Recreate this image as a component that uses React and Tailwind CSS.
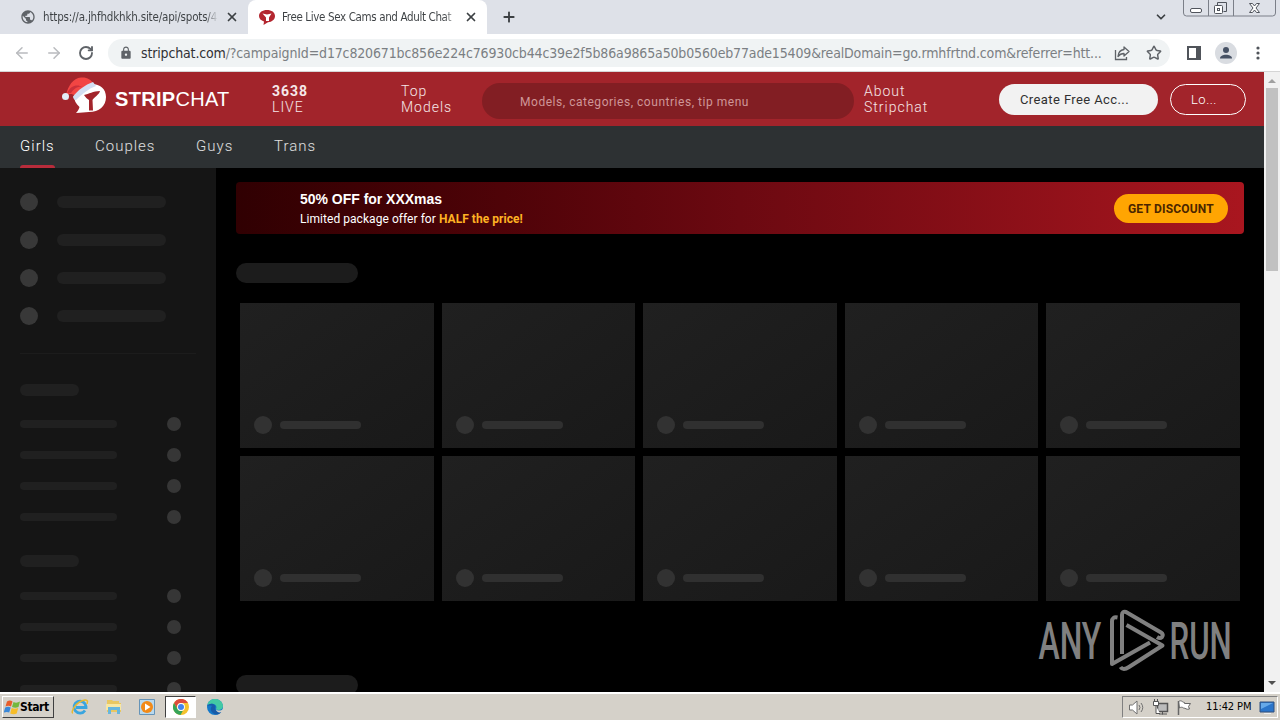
import { ArrowLeft, ArrowRight, ChevronDown, Plus, RotateCw, Star, X } from "lucide-react";
import { MdLock, MdPublic } from "react-icons/md";

const CATEGORIES = [
  { label: "Girls", cls: "ml-5 w-[35px] text-white", active: true },
  { label: "Couples", cls: "ml-10 w-[61px] text-white/85" },
  { label: "Guys", cls: "ml-10 w-[38px] text-white/85" },
  { label: "Trans", cls: "ml-10 w-[42px] text-white/85" },
];

const URL_REST =
  "/?campaignId=d17c820671bc856e224c76930cb44c39e2f5b86a9865a50b0560eb77ade15409&realDomain=go.rmhfrtnd.com&referrer=htt...";

function TabStrip() {
  return (
    <div className="flex h-[34px] bg-[#dee1e8] text-[11.5px] text-[#3c4043]">
      <div className="flex w-[248px] items-center pl-5">
        <MdPublic className="size-4 shrink-0 text-[#5f6368]" />
        <span className="ml-[7px] w-[175px] bg-gradient-to-r from-[#3c4043] from-93% to-transparent bg-clip-text pt-px tracking-[-0.18px] whitespace-nowrap text-transparent">
          https://a.jhfhdkhkh.site/api/spots/4
        </span>
        <X className="ml-[7px] size-3.5" strokeWidth={3} />
      </div>
      <div className="flex w-[239px] items-center rounded-t-lg bg-white pl-[11px]">
        <ChatIcon />
        <span className="ml-[7px] w-[176px] bg-gradient-to-r from-[#3c4043] from-92% to-transparent bg-clip-text pt-px tracking-[-0.36px] whitespace-nowrap text-transparent">
          Free Live Sex Cams and Adult Chat
        </span>
        <X className="ml-[6px] size-3.5" strokeWidth={3} />
      </div>
      <Plus className="mt-[9px] ml-[14px] size-4" strokeWidth={2.8} />
      <ChevronDown className="mt-[10px] ml-auto size-[14px]" strokeWidth={3} />
      <WindowButtons />
    </div>
  );
}

function ChatIcon() {
  return (
    <svg className="size-4 shrink-0" viewBox="0 0 16 16">
      <path d="M8 1c4.500 0 8 2.300 8 6 0 3.500-3 6-7 6.200L4.500 16l.5-3.500C2 11.500 0 9.700 0 7c0-3.700 3.500-6 8-6z" fill="#b3262f" />
      <path d="M3.500 4.500 8 5.500l4.500-1-2.500 4v3.500H7V8.500z" fill="#fff" />
    </svg>
  );
}

function WindowButtons() {
  return (
    <svg className="ml-[15px] h-[18px] w-[97px]" viewBox="0 0 97 18" fill="none" stroke="#7b7f88">
      <path d="M.5 0v13q0 3 3 3h86q3 0 3-3V0M25.500 0v16M50.500 0v16" />
      <g stroke="#50545c">
        <rect x="7.500" y="8.500" width="11" height="4" rx="1.500" fill="#fff" />
        <path d="M34.500 5.500v-3h9v9h-3" />
        <rect x="31.500" y="5.500" width="8" height="8" rx="1" fill="#fff" />
        <rect x="34.500" y="8.500" width="2" height="2" />
        <path d="M66.500 3.500h3l2 2.500 2-2.500h3l-3.500 4.500 3.500 4.500h-3l-2-2.500-2 2.500h-3l3.500-4.500z" fill="#fff" />
      </g>
    </svg>
  );
}

function Toolbar() {
  return (
    <div className="flex h-[38px] items-center border-b border-[#d5d5d5] bg-white text-[#5f6368]">
      <ArrowLeft className="ml-[13px] size-[18px] text-[#b9bbbe]" />
      <ArrowRight className="ml-[14px] size-[18px] text-[#b9bbbe]" />
      <RotateCw className="ml-[15px] size-4" strokeWidth={2.8} />
      <div className="ml-[14px] flex h-7 w-[1062px] items-center rounded-full bg-[#f0f3f4] pl-3">
        <MdLock className="-ml-px size-[14px]" />
        <p className="ml-[8px] w-[964px] pt-px text-[14px] tracking-[-0.15px] whitespace-nowrap text-[#7b7f83]">
          <span className="text-[#303134]">stripchat.com</span>
          {URL_REST}
        </p>
        <svg className="ml-[9px] size-4" viewBox="0 0 16 16" fill="none" stroke="currentColor" strokeWidth="1.300">
          <path d="M1.500 5v9.500h11V12" />
          <path d="M10 2l5 4.500-5 4.500V8.500c-3 0-4.500 1-6 3 .3-4 2.500-6.500 6-7z" strokeLinejoin="round" />
        </svg>
        <Star className="ml-4 size-4" strokeWidth={2.2} />
      </div>
      <svg className="ml-[17px] size-[14px]" viewBox="0 0 14 14">
        <path d="M1 1h12v12H1z" fill="none" stroke="#50545a" strokeWidth="2" />
        <path d="M9 1h4v12H9z" fill="#50545a" />
      </svg>
      <svg className="ml-[14px] size-[22px]" viewBox="0 0 22 22">
        <circle cx="11" cy="11" r="11" fill="#d9dce1" />
        <circle cx="11" cy="8" r="3" fill="#465164" />
        <path d="M5 16.500c0-5 12-5 12 0z" fill="#465164" />
      </svg>
      <svg className="ml-[19px] h-4 w-1" viewBox="0 0 4 16" fill="#50545a">
        <circle cx="2" cy="3" r="1.600" />
        <circle cx="2" cy="8" r="1.600" />
        <circle cx="2" cy="13" r="1.600" />
      </svg>
    </div>
  );
}

function SantaLogo() {
  return (
    <svg className="-mt-[4px] ml-[61px] h-[40px] w-[47px] shrink-0" viewBox="0 0 47 40">
      <path d="M31 7c8 0 14 5 14 13 0 9-7 15-17 15-4 0-8 1-13 1 2-2 3-4 3.500-6C15 27 13 23 13 19z" fill="#fff" />
      <path d="M23 18c5-1 9-4 16-4-1 4-6 6-7.500 9l.5 10.500h-4V23c-2-1-3.500-3-5-5z" fill="#a2242b" />
      <path d="M5 18C7 9 12 1 20 .5c6-.5 10 2 12 6-7 3-13 7-18 12-3-2-5-2-9-.5z" fill="#f24543" />
      <path d="M6 16c4-8 10-9 16-6-6-1-9 2-12 6z" fill="#cb303a" />
      <path d="M12 19.500C17 13 24 8 32 5l3 4c-8 3-14 8-20 14-2 0-3-2-3-3.500z" fill="#d3dff2" />
      <circle cx="4.500" cy="19.500" r="3.500" fill="#e3edf8" />
    </svg>
  );
}

function SiteHeader() {
  return (
    <header className="flex h-[54px] items-center bg-[#a2242b] font-['Roboto','Liberation_Sans',sans-serif] text-[14px] leading-4 font-light tracking-[1px] text-white/90">
      <SantaLogo />
      <p className="ml-[7px] w-[156px] font-['Liberation_Sans',sans-serif] text-[20px] leading-6 font-normal tracking-[0.3px] text-white">
        <b>STRIP</b>CHAT
      </p>
      <p className="w-[130px] pl-px">
        <b className="font-bold">3638</b>
        <br />
        LIVE
      </p>
      <p className="w-[81px]">
        Top
        <br />
        Models
      </p>
      <div className="mt-[4px] flex h-9 w-[372px] items-center rounded-full bg-[#821e23] pt-px pl-[38px] text-[12px] font-normal tracking-[0.53px] text-[#cf9698]">
        Models, categories, countries, tip menu
      </div>
      <p className="ml-[10px] w-[135px]">
        About
        <br />
        Stripchat
      </p>
      <button className="h-[31px] w-[159px] rounded-full bg-[#f2f2f2] pt-px pl-[21px] text-left text-[13px] font-normal tracking-[0.4px] whitespace-nowrap text-[#303030]">
        Create Free Acc...
      </button>
      <button className="ml-3 h-[31px] w-[76px] rounded-full border border-white pt-px pl-5 text-left text-[13px] tracking-[0.5px] text-white">
        Lo...
      </button>
    </header>
  );
}

function CategoryNav() {
  return (
    <nav className="flex h-[42px] bg-[#2d3133] font-['Roboto','Liberation_Sans',sans-serif] text-[15px] font-light tracking-[1px]">
      {CATEGORIES.map((c) => (
        <div key={c.label} className={`flex h-[42px] flex-col justify-between pt-[9px] whitespace-nowrap ${c.cls}`}>
          <span>{c.label}</span>
          {c.active && <span className="h-[3px] rounded-t-sm bg-[#b82c3b]" />}
        </div>
      ))}
    </nav>
  );
}

function SideGroup({ listCls }) {
  return (
    <div className="h-[171px]">
      <div className="h-3 w-[59px] rounded-full bg-[#202020]" />
      <div className={`space-y-[17px] ${listCls}`}>
        {[0, 1, 2, 3].map((i) => (
          <div key={i} className="flex w-[161px] items-center justify-between">
            <div className="h-2 w-[97px] rounded-full bg-[#202020]" />
            <div className="size-[14px] rounded-full bg-[#363636]" />
          </div>
        ))}
      </div>
    </div>
  );
}

function Sidebar() {
  return (
    <aside className="h-full w-[216px] shrink-0 overflow-hidden bg-[#151515] px-5 pt-[25px]">
      <div className="space-y-5">
        {[0, 1, 2, 3].map((i) => (
          <div key={i} className="flex items-center">
            <div className="size-[18px] rounded-full bg-[#383838]" />
            <div className="ml-[19px] h-3 w-[109px] rounded-full bg-[#202020]" />
          </div>
        ))}
      </div>
      <div className="mt-7 mb-[30px] h-px bg-[#1c1c1c]" />
      <SideGroup listCls="mt-[21px]" />
      <SideGroup listCls="mt-[22px]" />
    </aside>
  );
}

function Banner() {
  return (
    <div className="flex h-[52px] items-center rounded bg-gradient-to-r from-[#300002] via-[#6c0911] to-[#a9161f] pr-4 pl-16">
      <div className="pt-[2px]">
        <p className="text-[14px] leading-[18px] font-bold tracking-[-0.02px] text-white">50% OFF for XXXmas</p>
        <p className="mt-[2px] font-['Roboto','Liberation_Sans',sans-serif] text-[12px] leading-[18px] tracking-[0.05px] whitespace-nowrap text-white">
          Limited package offer for <b className="text-[#ffb323]">HALF the price!</b>
        </p>
      </div>
      <button className="ml-auto h-[29px] w-[114px] rounded-full bg-[#ffa502] pt-px font-['Roboto','Liberation_Sans',sans-serif] text-[12px] font-bold tracking-[0.2px] text-[#4a2500]">
        GET DISCOUNT
      </button>
    </div>
  );
}

function Content() {
  return (
    <main className="min-w-0 flex-1 bg-black px-5 pt-[14px]">
      <Banner />
      <div className="mt-[29px] h-5 w-[122px] rounded-full bg-[#1c1c1c]" />
      <div className="mx-1 mt-5 grid grid-cols-5 gap-2">
        {Array.from({ length: 10 }, (_, i) => (
          <div key={i} className="flex h-[145px] items-end bg-gradient-to-br from-[#202020] to-[#191919] pb-[14px] pl-[14px]">
            <div className="size-[18px] rounded-full bg-[#323232]" />
            <div className="mb-[5px] ml-2 h-2 w-[81px] rounded-full bg-[#303030]" />
          </div>
        ))}
      </div>
      <div className="mt-[74px] h-5 w-[122px] rounded-full bg-[#1c1c1c]" />
    </main>
  );
}

function Scrollbar() {
  return (
    <div className="flex w-4 flex-col items-center bg-[#f1f1f1]">
      <svg className="h-4 w-4" viewBox="0 0 16 16">
        <path d="M4 11l4-4 4 4z" fill="#a0a0a0" />
      </svg>
      <div className="h-[183px] w-3 bg-[#c1c1c1]" />
      <svg className="mt-auto h-[17px] w-4" viewBox="0 0 16 17">
        <path d="M4 6l4 4 4-4z" fill="#505050" />
      </svg>
    </div>
  );
}

function Watermark() {
  return (
    <svg className="absolute top-[605px] left-[1034px] h-[72px] w-[202px]" viewBox="0 0 202 72" fill="#808080">
      <g fontFamily="Roboto" fontSize="51" fontWeight="500">
        <text transform="translate(4.500 54.300) scale(.61 1)" textLength="103" lengthAdjust="spacingAndGlyphs">ANY</text>
        <text transform="translate(135.500 54.300) scale(.61 1)" textLength="102" lengthAdjust="spacingAndGlyphs">RUN</text>
      </g>
      <g fill="none" stroke="#808080" strokeWidth="4" strokeLinejoin="round">
        <path d="M83.500 12.500q-5.500-1-5.500 4V59L116 37.500" />
        <path d="M88 49V10q0-4 4-3l35 20.500q3 2 1 4.500-2 2-5 0" />
        <path d="M92.500 20L128.500 40.500 95 62q-6 4-8.500 0" />
      </g>
    </svg>
  );
}

function WindowsFlag() {
  return (
    <svg className="size-4 shrink-0" viewBox="0 0 16 16">
      <path d="M3 2.500q3-2 5.500 0L7 7.500Q4.500 6 1.500 7.500z" fill="#e85d2a" />
      <path d="M9.500 3q3 1.500 6.500-.5L14.500 8q-3 1.500-6.500 0z" fill="#73b83d" />
      <path d="M1.200 8.500q3-1.500 5.500 0L5.200 13.500Q3 12.500-.3 13.500z" fill="#3b88d8" />
      <path d="M7.700 9q3 1.500 6.500 0l-1.500 5.500q-3 1.500-6.500 0z" fill="#f7bd28" />
    </svg>
  );
}

function QuickLaunch() {
  return (
    <>
      <svg className="ml-[17px] size-[18px]" viewBox="0 0 18 18" fill="none">
        <path d="M14 12.500A6 6 0 1 1 15 8.500v1H5" stroke="#39a5df" strokeWidth="2.800" />
        <path d="M2 15C-1 15 5 3 14 2c4-.3 2 3 2 4" stroke="#e8b931" strokeWidth="1.500" />
      </svg>
      <svg className="ml-4 size-[18px]" viewBox="0 0 18 18">
        <path d="M2 2h5l1 1h6v2h2v9H2z" fill="#e9c761" />
        <path d="M1 6h15v6H1z" fill="#f8e7a2" />
        <path d="M3 16V9h12v7h-3v-4H6v4z" fill="#68b6dd" />
      </svg>
      <svg className="ml-[15px] size-[18px]" viewBox="0 0 18 18">
        <path d="M1.500 1.500h15v15h-15z" fill="#b9d9ee" stroke="#6694b8" />
        <circle cx="9" cy="9" r="6" fill="#f28a18" />
        <path d="M7 5.500v7L12.500 9z" fill="#fff" />
      </svg>
      <div className="ml-[9px] flex h-[22px] w-[31px] items-center justify-center border border-t-[#404040] border-r-white border-b-white border-l-[#404040] bg-white">
        <svg className="size-4" viewBox="0 0 16 16">
          <circle cx="8" cy="8" r="8" fill="#f4c22d" />
          <path d="M1 4a8 8 0 0 1 14 0H8a4 4 0 0 0-3.500 6z" fill="#dd4b3e" />
          <path d="M1 4l3.500 6A4 4 0 0 0 10 11.500L7.500 16A8 8 0 0 1 1 4z" fill="#35a459" />
          <circle cx="8" cy="8" r="3.900" fill="#fff" />
          <circle cx="8" cy="8" r="3" fill="#4284ed" />
        </svg>
      </div>
      <svg className="ml-[10px] size-[18px]" viewBox="0 0 18 18">
        <circle cx="9" cy="9" r="8" fill="#1478c9" />
        <path d="M1.500 7C3-1 16-1 17 8c0 4-5 5-7 3 2-4-3-7-8.500-4z" fill="#43c9a4" />
        <path d="M1 8c4-5 10-1 8 2 0 4 4 4 7 3-3 5-8 4-10 1-2-2-1-5 0-6-2-1-4 0-5 0z" fill="#175ba9" />
        <path d="M10 11c1 2 5 2 7 0l1 1-2 2c-3 1-6 0-6-3z" fill="#d5d1c9" />
      </svg>
    </>
  );
}

function Tray() {
  return (
    <div className="mr-[2px] ml-auto flex h-[22px] w-[156px] items-center border border-t-[#808080] border-r-white border-b-white border-l-[#808080] pl-[5px]">
      <svg className="size-[17px] shrink-0" viewBox="0 0 17 17" fill="none" stroke="#707070">
        <path d="M1.500 6h3L9 2v13l-4.500-4h-3z" fill="#fff" />
        <path d="M11 6q2 2.500 0 5M13 4q3.500 4.500 0 9" />
      </svg>
      <svg className="ml-[7px] size-[17px] shrink-0" viewBox="0 0 17 17" fill="none" stroke="#555">
        <path d="M5.500 4.500h10v8h-10z" fill="#bbb" strokeWidth="1.500" />
        <path d="M7 15h8M10.500 12.500v3" />
        <path d="M1.500 2.500h5v4h-5zM2.500 0v2M5.500 0v2M4 7v7.500h4" fill="#fff" />
      </svg>
      <svg className="ml-[7px] size-[17px] shrink-0" viewBox="0 0 17 17" stroke="#666">
        <path d="M2.500 2.500c3-2 4 1 6 1v1h6l-2 3 1 2.500c-3 1-4-1-6-1-1-1-3-1-4 0z" fill="#fff" />
        <path d="M2.500 2v14" strokeWidth="1.500" />
      </svg>
      <span className="ml-[13px] w-[50px] text-[11px] tracking-[-0.1px] whitespace-nowrap text-black">11:42 PM</span>
      <svg className="ml-[3px] size-[17px] shrink-0" viewBox="0 0 17 17">
        <path d="M1 3h14v10H1z" fill="#2b75ca" stroke="#31517e" />
        <path d="M2 4h12L2 10z" fill="#66a9e9" />
        <path d="M5 14h7v1H5z" fill="#eee" />
      </svg>
    </div>
  );
}

function Taskbar() {
  return (
    <footer className="flex h-7 items-center border-t-2 border-white bg-[#d5d1c9] font-['DejaVu_Sans_Condensed','DejaVu_Sans',sans-serif]">
      <div className="ml-[2px] flex h-[22px] w-[52px] items-center border border-t-white border-r-[#404040] border-b-[#404040] border-l-white pl-px text-[12px] font-bold tracking-[-0.4px] text-black">
        <WindowsFlag />
        Start
      </div>
      <QuickLaunch />
      <Tray />
    </footer>
  );
}

export default function App() {
  return (
    <div className="relative flex h-[720px] w-[1280px] flex-col overflow-hidden bg-white font-['Liberation_Sans',sans-serif]">
      <div className="font-['DejaVu_Sans_Condensed','DejaVu_Sans',sans-serif]">
        <TabStrip />
        <Toolbar />
      </div>
      <div className="flex h-[620px]">
        <div className="flex w-[1264px] flex-col">
          <SiteHeader />
          <CategoryNav />
          <div className="flex min-h-0 flex-1 overflow-hidden">
            <Sidebar />
            <Content />
          </div>
        </div>
        <Scrollbar />
      </div>
      <Taskbar />
      <Watermark />
    </div>
  );
}
